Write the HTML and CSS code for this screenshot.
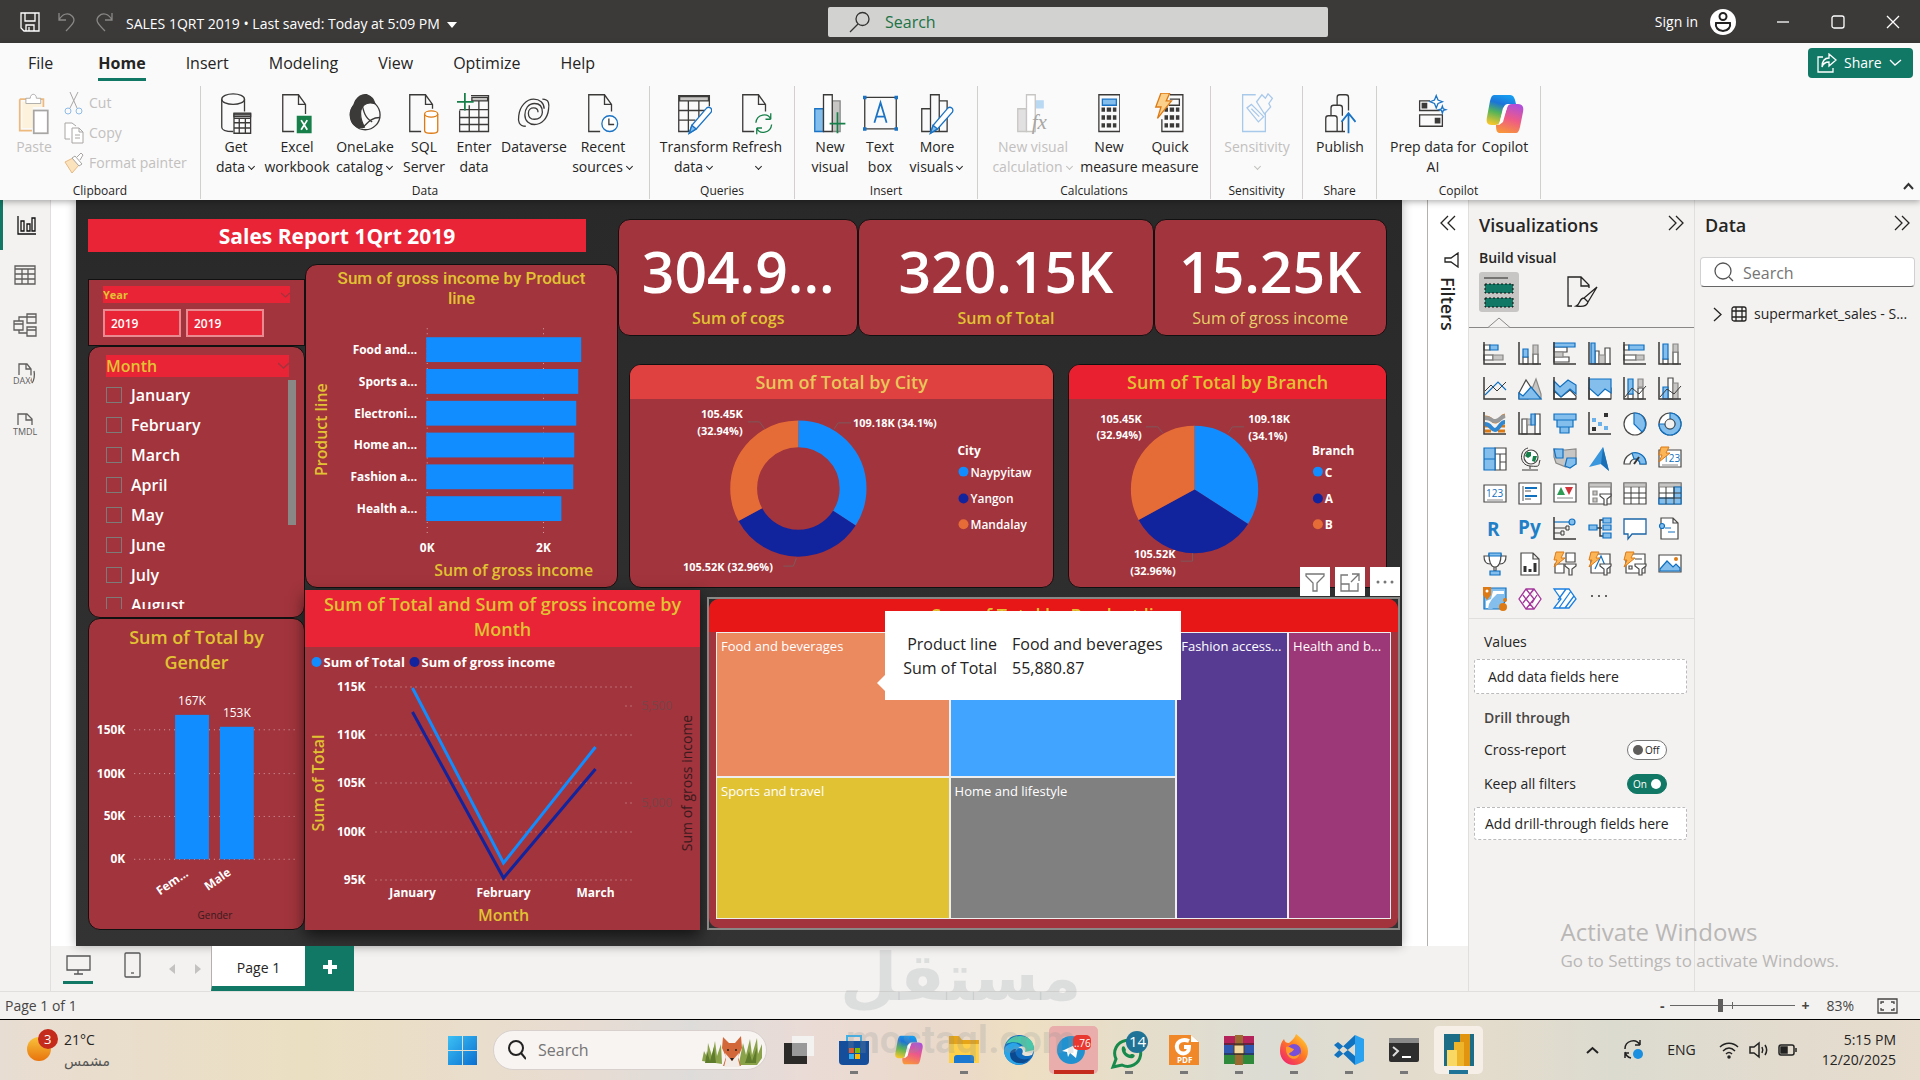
FILE: index.html
```html
<!DOCTYPE html>
<html lang="en">
<head>
<meta charset="utf-8">
<title>SALES 1QRT 2019</title>
<link rel="stylesheet" href="styles.css">
</head>
<body>
<header class="titlebar">
  <div class="title-left">
    <button class="tb-btn" aria-label="Save"><svg width="20" height="20" viewBox="0 0 20 20" class="ln"><path d="M1 1h18v18H4l-3-3zM5 1v8h10V1M6 19v-6h8v6M9 15v4"/></svg></button>
    <button class="tb-btn dim" aria-label="Undo"><svg width="20" height="20" viewBox="0 0 20 20" class="ln"><path d="M2 1v7h7M2 8c3-6 9-8 13-4s2 7-6 15"/></svg></button>
    <button class="tb-btn dim" aria-label="Redo"><svg width="20" height="20" viewBox="0 0 20 20" class="ln"><path d="M18 1v7h-7M18 8C15 2 9 0 5 4s-2 7 6 15"/></svg></button>
    <button class="doc-name">SALES 1QRT 2019 • Last saved: Today at 5:09 PM <svg width="10" height="6" viewBox="0 0 10 6"><path d="M0 0h10L5 6z" fill="#fff"/></svg></button>
  </div>
  <div class="title-search">
    <svg width="22" height="22" viewBox="0 0 22 22" class="ln"><circle cx="13.500" cy="8" r="6.500"/><path d="M9 13l-8 8"/></svg>
    <input type="text" placeholder="Search" aria-label="Search">
  </div>
  <div class="title-right">
    <button class="signin">Sign in <svg width="26" height="26" viewBox="0 0 26 26"><circle cx="13" cy="13" r="13" fill="#fff"/><g fill="none" stroke="#222" stroke-width="2"><circle cx="13" cy="7.500" r="3.500"/><path d="M6 14h14c1 4-2 8-7 8s-8-4-7-8z"/></g></svg></button>
    <button class="win" aria-label="Minimize"><svg width="14" height="14" viewBox="0 0 14 14" class="ln"><path d="M1 7h12"/></svg></button>
    <button class="win" aria-label="Maximize"><svg width="14" height="14" viewBox="0 0 14 14" class="ln"><rect x="1" y="1" width="12" height="12" rx="2"/></svg></button>
    <button class="win" aria-label="Close"><svg width="14" height="14" viewBox="0 0 14 14" class="ln"><path d="M1 1l12 12M13 1L1 13"/></svg></button>
  </div>
</header>

<section class="ribbon">
  <div class="tabrow">
    <nav class="tabs">
      <a href="#file">File</a><a href="#home" class="on">Home</a><a href="#insert">Insert</a><a href="#modeling">Modeling</a><a href="#view">View</a><a href="#optimize">Optimize</a><a href="#help">Help</a>
    </nav>
    <button class="share"><svg width="20" height="20" viewBox="0 0 20 20" class="ln"><path d="M6 4H1v15h15v-4M12 1l7 6-7 6V9c-4 0-6 2-7 5 0-6 3-9 7-9z"/></svg>Share<svg width="13" height="8" viewBox="0 0 13 8" class="ln"><path d="M1 1l5 5 6-5"/></svg></button>
  </div>
  <div class="groups">
    <div class="group g-clip">
      <div class="clip">
        <button class="cmd off"><svg width="36" height="48" viewBox="0 0 36 48"><path d="M2 7h9M23 7h6v9M2 7v36h14" fill="none" stroke="#eeb97c" stroke-width="2"/><path d="M5 10h22v6H17v24H5z" fill="#fdf3dc"/><path d="M9 12V6h5c0-6 7-6 7 0h5v6z" fill="#fff" stroke="#a8a6a4"/><rect x="18" y="20" width="16" height="26" fill="#fff" stroke="#a8a6a4" stroke-width="2"/></svg>Paste</button>
        <div class="clip-list">
          <button class="off"><svg width="20" height="24" viewBox="0 0 20 24" fill="none"><path d="M6 1l7 16M14 1L6 17" stroke="#a8a6a4"/><circle cx="4" cy="20" r="3" stroke="#8fbce6"/><circle cx="15" cy="20" r="3" stroke="#8fbce6"/></svg>Cut</button>
          <button class="off"><svg width="20" height="24" viewBox="0 0 20 24" fill="#fff" stroke="#a8a6a4"><path d="M6 18H1V2h7l4 3"/><path d="M8 7h7l4 4v11H8zM15 7v4h4M11 14h5M11 17h5"/></svg>Copy</button>
          <button class="off"><svg width="20" height="22" viewBox="0 0 20 22" fill="none"><path d="M1 10l8-4 6 7-7 8z" fill="#fbe3bd" stroke="#e8b982"/><path d="M8 6l3-2 7 8-3 2zM13 5l4-4 2 2-3 5" fill="#fff" stroke="#a8a6a4"/></svg>Format painter</button>
        </div>
      </div>
      <h3>Clipboard</h3>
    </div>
    <div class="group g-data">
      <div class="cmds">
        <button class="cmd"><svg width="36" height="48" viewBox="0 0 36 48" class="ic"><path d="M2 7v32c0 3 5 5 13 5M28 7v14"/><ellipse cx="15" cy="7" rx="13" ry="6"/><path d="M16 23h19v23H16zM16 29h19M16 34h19M16 40h19M22 29v17M29 29v17"/><path d="M16 24h19v3H16z" fill="#888"/></svg>Get<br>data<i></i></button>
        <button class="cmd"><svg width="36" height="48" viewBox="0 0 36 48" class="ic"><path d="M15 44H2V2h18l8 11v11M20 2v11h8"/><rect x="18" y="26" width="17" height="20" fill="#17804a" stroke="none"/><path d="M23 31l7 11M30 31l-7 11" stroke="#fff" stroke-width="2"/></svg>Excel<br>workbook</button>
        <button class="cmd"><svg width="36" height="44" viewBox="0 0 36 48" class="ic"><circle cx="18" cy="25" r="17"/><path d="M5 14C8 4 15 1 20 2c6 2 8 6 9 10-8-2-14 1-16 8-1 6 0 11 4 19-6 2-10 0-14-6C0 26 1 19 5 14z" fill="#3b3a39"/><path d="M14 11c2 10 4 18 12 22M14 40c5-2 8-12 21-12"/></svg>OneLake<br>catalog<i></i></button>
        <button class="cmd"><svg width="36" height="48" viewBox="0 0 36 48" class="ic"><path d="M15 44H2V2h18l8 11v5M20 2v11h8"/><path d="M19 24v19c0 4 15 4 15 0V24" stroke="#dd7a14" fill="#fff"/><ellipse cx="26.500" cy="24" rx="7.500" ry="3.500" stroke="#dd7a14" fill="#fff"/></svg>SQL<br>Server</button>
        <button class="cmd"><svg width="38" height="48" viewBox="0 0 38 48" class="ic"><path d="M16 3h20v41H3V20M3 19h33M3 28h33M3 36h33M14 14v30M25 9v35"/><path d="M17 5h18v4H17z" fill="#c8c6c4"/><path d="M9 0v20M0 10h19" stroke="#17804a" stroke-width="2"/></svg>Enter<br>data</button>
        <button class="cmd"><svg width="38" height="48" viewBox="0 0 38 48" class="ic"><path d="M29 7c8 0 8 6 7 12-1 10-8 17-16 17-6 0-11-4-11-11S13 12 20 12s9 5 9 10-4 8-9 8-7-3-7-7 3-6 6-6 5 2 5 5"/><path d="M10 38c-8 0-9-6-8-12C3 15 11 7 19 7c7 0 12 4 12 11"/></svg>Dataverse<br>&nbsp;</button>
        <button class="cmd"><svg width="36" height="48" viewBox="0 0 36 48" class="ic"><path d="M15 44H2V2h18l8 11v8M20 2v11h8"/><circle cx="26" cy="35" r="9" stroke="#1a73c4" fill="#fff"/><path d="M25 29v7h6"/></svg>Recent<br>sources<i></i></button>
      </div>
      <h3>Data</h3>
    </div>
    <div class="group g-query">
      <div class="cmds">
        <button class="cmd"><svg width="40" height="48" viewBox="0 0 40 48" class="ic"><path d="M15 44H2V3h35v12M2 20h30M2 31h19M13 9v35M25 9v20"/><path d="M3 4h33v5H3z" fill="#c8c6c4"/><path d="M14 46l3-9 17-20c3-2 7 1 5 5L22 41z" fill="#fff" stroke="#1a73c4"/><path d="M14 46l3-9 5 4z" fill="#83beec" stroke="#1a73c4"/></svg>Transform<br>data<i></i></button>
        <button class="cmd"><svg width="36" height="48" viewBox="0 0 36 48" class="ic"><path d="M15 44H2V2h18l8 11v8M20 2v11h8"/><path d="M17 34c1-10 14-12 17-4v-7m0 7h-6M35 36c-1 10-14 12-17 4v7m0-7h6" stroke="#17804a"/></svg>Refresh<br><i></i></button>
      </div>
      <h3>Queries</h3>
    </div>
    <div class="group g-insert">
      <div class="cmds">
        <button class="cmd"><svg width="38" height="48" viewBox="0 0 38 48" class="ic"><path d="M22 9h9v35h-9z" fill="#c8c6c4" stroke="#888"/><path d="M2 18h10v26H2z" fill="#83beec" stroke="#1a73c4"/><path d="M12 2h10v42H12z" fill="#fff"/><path d="M28 22v24M19 35h18" stroke="#17804a" stroke-width="2"/></svg>New<br>visual</button>
        <button class="cmd"><svg width="40" height="48" viewBox="0 0 40 48" class="ic"><path d="M2 5h36v36H2z"/><path d="M13 34L20 11l7 23M15 27h10" stroke="#1a73c4" stroke-width="2"/><path d="M0 3h4v4H0zM36 3h4v4h-4zM0 39h4v4H0zM36 39h4v4h-4z" fill="#1a73c4" stroke="none"/></svg>Text<br>box</button>
        <button class="cmd"><svg width="38" height="48" viewBox="0 0 38 48" class="ic"><path d="M2 18h10v26H2zM12 2h10v42H12zM22 9h9v35h-9"/><path d="M12 46l3-9 17-20c3-2 7 1 5 5L20 41z" fill="#fff" stroke="#1a73c4"/><path d="M12 46l3-9 5 4z" fill="#83beec" stroke="#1a73c4"/></svg>More<br>visuals<i></i></button>
      </div>
      <h3>Insert</h3>
    </div>
    <div class="group g-calc">
      <div class="cmds">
        <button class="cmd off"><svg width="38" height="48" viewBox="0 0 38 48" class="ic pale"><path d="M2 18h10v26H2z" fill="#e1e1e1"/><path d="M22 9h9v8h-9z" fill="#b9d8f2" stroke="#b9d8f2"/><path d="M12 2h10v42H12z" fill="#fff"/><text x="18" y="41" class="fx">fx</text></svg>New visual<br>calculation<i></i></button>
        <button class="cmd"><svg width="26" height="48" viewBox="0 0 26 48" class="ic"><path d="M1 2h24v42H1z"/><path d="M5 7h16v7H5z" fill="#83beec" stroke="#1a73c4"/><path d="M4 19h4m2 0h5m2 0h4M4 28h4m2 0h5m2 0h4M4 37h4m2 0h5m2 0h4" stroke-width="5"/></svg>New<br>measure</button>
        <button class="cmd"><svg width="36" height="48" viewBox="0 0 36 48" class="ic"><path d="M18 2h15v42H9V30M18 7h11v7H17"/><path d="M12 19h4m2 0h5m2 0h4M12 28h4m2 0h5m2 0h4M12 37h4m2 0h5m2 0h4" stroke-width="5"/><path d="M8 0h10l-4 9h6L4 29l4-13H2z" fill="#fbd08a" stroke="#dd7a14"/></svg>Quick<br>measure</button>
      </div>
      <h3>Calculations</h3>
    </div>
    <div class="group g-sens">
      <div class="cmds">
        <button class="cmd off"><svg width="38" height="48" viewBox="0 0 38 48" class="ic sky"><path d="M18 2H3v42h26V22M8 17l5-4 14 14-6 6zM13 18l9 9M19 10l6-8 4 4 3-5 5 5-4 6 2 4-7 8z"/></svg>Sensitivity<br><i></i></button>
      </div>
      <h3>Sensitivity</h3>
    </div>
    <div class="group g-share">
      <div class="cmds">
        <button class="cmd"><svg width="36" height="48" viewBox="0 0 36 48" class="ic"><path d="M15 13V5c0-2 1-3 3-3h7c2 0 3 1 3 3v15M8 25V17c0-2 1-3 3-3h7c2 0 3 1 3 3v9M2 44V29c0-2 1-3 3-3h7c2 0 3 1 3 3v15zM2 44h22M21 32v12"/><path d="M28 46V23M20 33l8-10 8 10" stroke="#1a73c4" stroke-width="2"/></svg>Publish<br>&nbsp;</button>
      </div>
      <h3>Share</h3>
    </div>
    <div class="group g-copilot">
      <div class="cmds">
        <button class="cmd"><svg width="36" height="48" viewBox="0 0 36 48" class="ic"><path d="M15 9H3v11h23M3 25h26v13H3z"/><path d="M6 12h5v5H6zM21 29h5v5h-5z" fill="#3b3a39"/><path d="M22 3l2 5 5 2-5 2-2 5-2-5-5-2 5-2zM29 15l1 3 3 1-3 1-1 3-1-3-3-1 3-1z" stroke="#1a73c4" fill="#fff"/></svg>Prep data for<br>AI</button>
        <button class="cmd"><svg width="38" height="42" viewBox="0 0 38 40"><use href="#copilot"/></svg>Copilot<br>&nbsp;</button>
      </div>
      <h3>Copilot</h3>
    </div>
    <button class="collapse" aria-label="Collapse ribbon"><svg width="11" height="8" viewBox="0 0 11 8" fill="none" stroke="#333" stroke-width="2"><path d="M1 7l4.500-5L10 7"/></svg></button>
  </div>
</section>

<main class="main">
  <nav class="rail">
    <a href="#report" class="on" aria-label="Report view"><svg width="20" height="20" viewBox="0 0 20 20" class="ln"><path d="M1 1v18h18M4 6h3v10H4zM10 9h3v7h-3zM15 3h3v13h-3z"/></svg></a>
    <a href="#table" aria-label="Table view"><svg width="22" height="20" viewBox="0 0 22 20" class="ln"><path d="M1 1h20v18H1zM1 4h20M1 9h20M1 14h20M8 4v15M14 4v15"/></svg></a>
    <a href="#model" aria-label="Model view"><svg width="24" height="24" viewBox="0 0 24 24" class="ln"><path d="M1 8h9v9H1zM1 11h9M14 1h9v9h-9zM14 4h9M14 14h9v9h-9zM14 17h9M6 8V4h8M6 17v3h8"/></svg></a>
    <a href="#dax" aria-label="DAX query view"><svg width="24" height="24" viewBox="0 0 24 24" class="ln"><path d="M6 12V1h8l4 5v14l-2 1M13 1v5h5M21 8c1 4 0 10-2 12"/><text x="0" y="21" class="rt">DAX</text></svg></a>
    <a href="#tmdl" aria-label="TMDL view"><svg width="26" height="24" viewBox="0 0 26 24" class="ln"><path d="M6 12V1h9l5 5v6M14 1v6h6"/><text x="1" y="22" class="rt">TMDL</text></svg></a>
  </nav>

  <div class="work">
    <div class="stage">
      <div class="canvas">
        <h1 class="rep-title">Sales Report 1Qrt 2019</h1>

        <section class="card square year">
          <label class="slicer-head small" for="y1">Year<svg width="9" height="6" viewBox="0 0 9 6" class="ln"><path d="M0 1l4.500 4L9 1"/></svg></label>
          <div class="years"><input id="y1" type="text" value="2019"><input type="text" value="2019" aria-label="Year to"></div>
        </section>

        <section class="card month">
          <h2 class="slicer-head">Month<svg width="11" height="8" viewBox="0 0 11 8" class="ln"><path d="M0 1l5.500 5L11 1"/></svg></h2>
          <div class="months">
            <label><input type="checkbox">January</label><label><input type="checkbox">February</label><label><input type="checkbox">March</label><label><input type="checkbox">April</label><label><input type="checkbox">May</label><label><input type="checkbox">June</label><label><input type="checkbox">July</label><label><input type="checkbox">August</label>
            <span class="scroll"></span>
          </div>
        </section>

        <section class="card product">
          <h2 class="din">Sum of gross income by Product line</h2>
          <svg viewBox="0 0 313 278" class="chart">
            <path class="grid" d="M122 18v210M239 18v210"/>
            <g fill="#118dff"><rect x="121" y="27" width="156" height="25"/><rect x="121" y="59" width="153" height="25"/><rect x="121" y="91" width="151" height="25"/><rect x="121" y="123" width="149" height="25"/><rect x="121" y="155" width="148" height="25"/><rect x="121" y="187" width="136" height="25"/></g>
            <g class="t12 b end"><text x="112" y="44">Food and...</text><text x="112" y="76">Sports a...</text><text x="112" y="108">Electroni...</text><text x="112" y="140">Home an...</text><text x="112" y="172">Fashion a...</text><text x="112" y="204">Health a...</text></g>
            <g class="t12 b mid"><text x="122" y="243">0K</text><text x="239" y="243">2K</text></g>
            <text class="ax mid" x="209" y="267">Sum of gross income</text>
            <text class="ax mid" transform="translate(21 120) rotate(-90)">Product line</text>
          </svg>
        </section>

        <div class="kpis">
          <section class="card kpi k1"><strong>304.9...</strong><span>Sum of cogs</span></section>
          <section class="card kpi k2"><strong>320.15K</strong><span>Sum of Total</span></section>
          <section class="card kpi k3"><strong>15.25K</strong><span>Sum of gross income</span></section>
        </div>

        <div class="pies">
          <section class="card city">
            <h2 class="head">Sum of Total by City</h2>
            <svg viewBox="0 0 425 189" class="chart">
              <g fill="none" stroke-width="27" transform="rotate(-90 169 90)"><circle cx="169" cy="90" r="55" pathLength="100" stroke="#118dff" stroke-dasharray="34.1 65.9"/><circle cx="169" cy="90" r="55" pathLength="100" stroke="#12239e" stroke-dasharray="32.96 67.04" stroke-dashoffset="-34.1"/><circle cx="169" cy="90" r="55" pathLength="100" stroke="#e66c37" stroke-dasharray="32.94 67.06" stroke-dashoffset="-67.06"/></g>
              <path class="lead" d="M118 23h12l5 7M205 30l4-6h13M154 168h10l3-8"/>
              <g class="t11 b"><text class="end" x="113" y="19">105.45K</text><text class="end" x="113" y="36">(32.94%)</text><text x="224" y="28">109.18K (34.1%)</text><text x="53" y="173">105.52K (32.96%)</text></g>
              <g class="t12 b"><text x="329" y="56">City</text></g>
              <g class="t12 m"><text x="342" y="78">Naypyitaw</text><text x="342" y="105">Yangon</text><text x="342" y="131">Mandalay</text></g>
              <circle cx="335" cy="73" r="5" fill="#118dff"/><circle cx="335" cy="100" r="5" fill="#12239e"/><circle cx="335" cy="126" r="5" fill="#e66c37"/>
            </svg>
          </section>
          <section class="card branch">
            <h2 class="head">Sum of Total by Branch</h2>
            <svg viewBox="0 0 318 189" class="chart">
              <g fill="none" stroke-width="64" transform="rotate(-90 126 91)"><circle cx="126" cy="91" r="32" pathLength="100" stroke="#118dff" stroke-dasharray="34.1 65.9"/><circle cx="126" cy="91" r="32" pathLength="100" stroke="#12239e" stroke-dasharray="32.96 67.04" stroke-dashoffset="-34.1"/><circle cx="126" cy="91" r="32" pathLength="100" stroke="#e66c37" stroke-dasharray="32.94 67.06" stroke-dashoffset="-67.06"/></g>
              <path class="lead" d="M77 28h12l5 6M160 34l4-6h12M112 163h12v-8"/>
              <g class="t11 b"><text class="end" x="73" y="24">105.45K</text><text class="end" x="73" y="40">(32.94%)</text><text x="180" y="24">109.18K</text><text x="180" y="41">(34.1%)</text><text class="end" x="107" y="160">105.52K</text><text class="end" x="107" y="177">(32.96%)</text></g>
              <g class="t12 b"><text x="244" y="56">Branch</text><text x="257" y="78">C</text><text x="257" y="105">A</text><text x="257" y="131">B</text></g>
              <circle cx="250" cy="73" r="5" fill="#118dff"/><circle cx="250" cy="100" r="5" fill="#12239e"/><circle cx="250" cy="126" r="5" fill="#e66c37"/>
            </svg>
          </section>
        </div>

        <section class="card gender">
          <h2>Sum of Total by Gender</h2>
          <svg viewBox="0 0 215 255" class="chart">
            <path class="grid" d="M45 55h162M45 99h162M45 142h162M45 185h162"/>
            <rect x="86" y="40" width="34" height="145" fill="#118dff"/><rect x="131" y="52" width="34" height="133" fill="#118dff"/>
            <g class="t12 mid"><text x="103" y="30">167K</text><text x="148" y="42">153K</text></g>
            <g class="t12 b end"><text x="36" y="59">150K</text><text x="36" y="103">100K</text><text x="36" y="146">50K</text><text x="36" y="189">0K</text><text transform="translate(100 201) rotate(-35)">Fem...</text><text transform="translate(143 200) rotate(-35)">Male</text></g>
            <text class="t10 mid dark" x="126" y="245">Gender</text>
          </svg>
        </section>

        <section class="card square line">
          <h2 class="head">Sum of Total and Sum of gross income by Month</h2>
          <svg viewBox="0 0 394 283" class="chart">
            <path class="grid" d="M70 40h256M70 88h256M70 136h256M70 185h256M70 233h256M320 59h8M320 156h8"/>
            <path d="M107 65l91 166 92-109" fill="none" stroke="#12239e" stroke-width="3"/>
            <path d="M107 41l91 175 92-116" fill="none" stroke="#118dff" stroke-width="3"/>
            <circle cx="11" cy="15" r="5" fill="#118dff"/><circle cx="109" cy="15" r="5" fill="#12239e"/>
            <g class="t13 b"><text x="18" y="20">Sum of Total</text><text x="116" y="20">Sum of gross income</text></g>
            <g class="t12 b end"><text x="60" y="44">115K</text><text x="60" y="92">110K</text><text x="60" y="140">105K</text><text x="60" y="189">100K</text><text x="60" y="237">95K</text></g>
            <g class="t12 b mid"><text x="107" y="250">January</text><text x="198" y="250">February</text><text x="290" y="250">March</text></g>
            <g class="t12 faint"><text x="336" y="63">5,500</text><text x="336" y="160">5,000</text></g>
            <text class="ax mid" x="198" y="274">Month</text>
            <text class="ax mid" transform="translate(18 136) rotate(-90)">Sum of Total</text>
            <text class="t14 mid dark" transform="translate(386 136) rotate(-90)">Sum of gross income</text>
          </svg>
        </section>

        <section class="treemap">
          <div class="vis-tools">
            <button aria-label="Filters"><svg width="20" height="20" viewBox="0 0 20 20" class="ln"><path d="M1 2h18v2l-7 7v8H8v-8L1 4z"/></svg></button>
            <button aria-label="Focus mode"><svg width="20" height="20" viewBox="0 0 20 20" class="ln"><path d="M8 3H1v16h17v-8M1 12h8v7M12 2h7v7M19 2l-8 8"/></svg></button>
            <button aria-label="More options"><svg width="20" height="20" viewBox="0 0 20 20"><g fill="#777"><circle cx="3" cy="10" r="1.500"/><circle cx="10" cy="10" r="1.500"/><circle cx="17" cy="10" r="1.500"/></g></svg></button>
          </div>
          <div class="tm-card">
            <h2>Sum of Total by Product line</h2>
            <div class="tiles">
              <div class="c-food">Food and beverages</div><div class="c-elec"></div><div class="c-sport">Sports and travel</div><div class="c-home">Home and lifestyle</div><div class="c-fash">Fashion access...</div><div class="c-health">Health and b...</div>
            </div>
          </div>
          <dl class="tip"><dt>Product line</dt><dd>Food and beverages</dd><dt>Sum of Total</dt><dd>55,880.87</dd></dl>
        </section>
      </div>
      <aside class="filters">
        <button aria-label="Expand filters"><svg width="16" height="16" viewBox="0 0 16 16" class="ln"><path d="M8 1L1 8l7 7M15 1L8 8l7 7"/></svg></button>
        <svg width="15" height="16" viewBox="0 0 15 16" class="ln"><path d="M14 1v14L7 10H1V6h6z"/></svg>
        <h2>Filters</h2>
      </aside>
    </div>
    <div class="pages">
      <button class="dev on" aria-label="Desktop layout"><svg width="25" height="20" viewBox="0 0 25 20" class="ln"><path d="M1 1h23v14H1zM12 15v4M8 19h9"/></svg></button>
      <button class="dev" aria-label="Mobile layout"><svg width="17" height="26" viewBox="0 0 17 26" class="ln"><rect x="1" y="1" width="15" height="24" rx="1"/><path d="M7 21h3"/></svg></button>
      <button class="arr" aria-label="Previous page"><svg width="6" height="10" viewBox="0 0 6 10"><path d="M6 0v10L0 5z" fill="#c4c2c0"/></svg></button>
      <button class="arr" aria-label="Next page"><svg width="6" height="10" viewBox="0 0 6 10"><path d="M0 0v10l6-5z" fill="#c4c2c0"/></svg></button>
      <a href="#page1" class="page">Page 1</a>
      <button class="add" aria-label="New page"><svg width="14" height="14" viewBox="0 0 14 14"><path d="M7 0v14M0 7h14" stroke="#fff" stroke-width="4"/></svg></button>
    </div>
  </div>

  <aside class="pane viz">
    <div class="pane-head"><h2>Visualizations</h2><button aria-label="Collapse"><svg width="16" height="16" viewBox="0 0 16 16" class="ln"><path d="M1 1l7 7-7 7M8 1l7 7-7 7"/></svg></button></div>
    <h3 class="build">Build visual</h3>
    <div class="modes">
      <button class="on" aria-label="Build visual"><svg width="30" height="32" viewBox="0 0 30 32"><path d="M0 2h24" stroke="#222"/><path d="M1 8h28v9H1zM1 22h28v9H1z" fill="#117865" stroke="#111" stroke-dasharray="2 2"/></svg></button>
      <button aria-label="Format visual"><svg width="32" height="32" viewBox="0 0 32 32" class="ln"><path d="M5 30H1V1h13l8 8v3M14 1v9h8M30 11L17 22l4 4zM17 22c-5 0-3 6-8 8 6 1 11 0 12-4"/></svg></button>
    </div>
    <svg class="notch" width="22" height="11" viewBox="0 0 22 11"><path d="M0 10.500L11 1l11 9.500" fill="#f3f2f1" stroke="#8a8886"/></svg>
    <div class="icons">
      <button aria-label="Stacked bar chart"><svg viewBox="0 0 24 24"><path class="w" d="M1 3h6v5H1zM1 13h9v5H1z"/><path class="u" d="M7 3h8v5H7z"/><path class="g" d="M10 13h10v5H10z"/><path class="a" d="M1 0v22h22"/></svg></button>
      <button aria-label="Stacked column chart"><svg viewBox="0 0 24 24"><path class="w" d="M5 15h5v7H5zM15 12h5v10h-5z"/><path class="u" d="M5 7h5v8H5z"/><path class="g" d="M15 3h5v9h-5z"/><path class="a" d="M1 0v22h22"/></svg></button>
      <button aria-label="Clustered bar chart"><svg viewBox="0 0 24 24"><path class="w" d="M1 5h13v5H1zM1 15h15v5H1z"/><path class="g" d="M1 10h9v5H1z"/><path class="u" d="M1 1h21v4H1z"/><path class="a" d="M1 0v22h22"/></svg></button>
      <button aria-label="Clustered column chart"><svg viewBox="0 0 24 24"><path class="w" d="M7 9h4v13H7zM17 6h5v16h-5z"/><path class="g" d="M11 13h6v9h-6z"/><path class="u" d="M3 1h4v21H3z"/><path class="a" d="M1 0v22h22"/></svg></button>
      <button aria-label="100% stacked bar chart"><svg viewBox="0 0 24 24"><path class="w" d="M1 3h5v5H1zM1 13h12v5H1z"/><path class="u" d="M6 3h15v5H6z"/><path class="g" d="M13 13h8v5h-8z"/><path class="a" d="M1 0v22h22"/></svg></button>
      <button aria-label="100% stacked column chart"><svg viewBox="0 0 24 24"><path class="w" d="M5 17h5v5H5zM15 10h5v12h-5z"/><path class="u" d="M5 2h5v15H5z"/><path class="g" d="M15 2h5v8h-5z"/><path class="a" d="M1 0v22h22"/></svg></button>

      <button aria-label="Line chart"><svg viewBox="0 0 24 24"><path class="n u" d="M2 18L15 5l8 8"/><path class="n" d="M2 14l6-6 6 6 9-9"/><path class="a" d="M1 0v22h22"/></svg></button>
      <button aria-label="Area chart"><svg viewBox="0 0 24 24"><path class="g" d="M10 22l8-20 5 15v5z"/><path class="w" d="M1 16L8 3l8 12-6 7H1z"/><path class="u" d="M1 22v-6l4 3 8-9 10 12z"/></svg></button>
      <button aria-label="Stacked area chart"><svg viewBox="0 0 24 24"><path class="w" d="M1 14l7 6 9-7 6 6v3H1z"/><path class="u" d="M1 4l6 6 8-7 8 5v9l-6-5-9 8-7-7z"/><path class="a" d="M1 0v22h22"/></svg></button>
      <button aria-label="100% stacked area chart"><svg viewBox="0 0 24 24"><path class="w" d="M1 11h22v11H1z"/><path class="u" d="M1 2h22v14l-6-4-7 7-9-8z"/><path class="a" d="M1 0v22h22"/></svg></button>
      <button aria-label="Line and stacked column chart"><svg viewBox="0 0 24 24"><path class="w" d="M5 17h5v5H5zM15 11h5v11h-5z"/><path class="u" d="M5 2h5v15H5z"/><path class="g" d="M15 2h5v8h-5z"/><path class="n" d="M2 20l7-9 7 6 7-8"/><path class="a" d="M1 0v22h22"/></svg></button>
      <button aria-label="Line and clustered column chart"><svg viewBox="0 0 24 24"><path class="w" d="M10 1h5v21h-5z"/><path class="g" d="M15 6h5v16h-5z"/><path class="u" d="M5 10h5v12H5z"/><path class="n" d="M2 20l7-8 7 5 7-8"/><path class="a" d="M1 0v22h22"/></svg></button>

      <button aria-label="Ribbon chart"><svg viewBox="0 0 24 24"><path d="M2 5c8 0 6 6 11 5s4-6 9-7M2 19h6m7 0h7M2 14h5m9 0h6" fill="none" stroke="#dd7a14" stroke-width="3"/><path d="M2 6c8 0 6 4 11 3s4-4 9-5" fill="none" stroke="#999" stroke-width="4"/><path d="M2 12c6 0 6 6 10 6s5-8 10-8" fill="none" stroke="#2f86d1" stroke-width="4"/><path class="a" d="M1 0v22h22"/></svg></button>
      <button aria-label="Waterfall chart"><svg viewBox="0 0 24 24"><path class="w" d="M4 7h5v15H4zM17 2h5v20h-5z"/><path class="g" d="M9 7h5v6H9z"/><path class="u" d="M13 2h4v11h-4z"/><path class="a" d="M1 0v22h22"/></svg></button>
      <button aria-label="Funnel"><svg viewBox="0 0 24 24"><path class="u" d="M1 2h22v6H1zM4 8h16v7H4zM7 15h9v6H7z"/></svg></button>
      <button aria-label="Scatter chart"><svg viewBox="0 0 24 24"><path d="M4 6h4v4H4zM10 10h4v4h-4zM16 14h4v4h-4z" fill="#6cb1ea"/><path d="M16 1h4v4h-4zM4 15h4v4H4z" fill="#333"/><path class="a" d="M1 0v22h22"/></svg></button>
      <button aria-label="Pie chart"><svg viewBox="0 0 24 24"><circle class="w" cx="12" cy="12" r="11"/><path class="u" d="M11 1a11 11 0 0 1 8 19l-8-8z"/></svg></button>
      <button aria-label="Donut chart"><svg viewBox="0 0 24 24"><circle class="w" cx="12" cy="12" r="11"/><path class="u" d="M12 1a11 11 0 1 1-11 11h6a5 5 0 1 0 5-5z"/><circle cx="12" cy="12" r="5" fill="#f3f2f1" stroke="#444"/></svg></button>

      <button aria-label="Treemap"><svg viewBox="0 0 24 24"><path class="w" d="M12 1h11v6H12zM12 7h5v16h-5zM17 7h6v8h-6zM17 15h6v8h-6z"/><path class="u" d="M1 1h11v11H1zM1 12h11v11H1z"/></svg></button>
      <button aria-label="Map"><svg viewBox="0 0 24 24"><circle class="w" cx="13" cy="10" r="7"/><path d="M9 5h4v4l-3 2-3-2zM15 9h4l-2 6-3-1z" fill="#17804a"/><path class="n" d="M10 1C1 3 1 18 12 19s8 0 10-6M12 19v3M4 23h16"/></svg></button>
      <button aria-label="Filled map"><svg viewBox="0 0 24 24"><path class="g" d="M1 2l11 1 11-1v15l-10 3-10-4-2-6z"/><path class="u" d="M1 2h9v9H3zM14 11h9v6l-6 4-5-2z"/></svg></button>
      <button aria-label="Azure map"><svg viewBox="0 0 24 24"><path d="M15 0l6 24-8-7-12 3z" fill="#3a96dd"/><path d="M15 0l6 24-8-7z" fill="#1b70b5"/></svg></button>
      <button aria-label="Gauge"><svg viewBox="0 0 24 24"><path class="w" d="M1 17a11 11 0 0 1 22 0h-6a5 5 0 0 0-10 0z"/><path class="u" d="M9 6a11 11 0 0 1 14 11h-6a5 5 0 0 0-6-5z"/><path d="M11 17l5-7" stroke="#333" stroke-width="2"/></svg></button>
      <button aria-label="Card (new)"><svg viewBox="0 0 24 24"><path class="w" d="M1 3h22v17H1z"/><text x="5" y="15" class="num">123</text><path d="M4 18h16" stroke="#888"/><path class="o" d="M3 0h8L8 6h4L1 15l3-7H1z"/></svg></button>

      <button aria-label="Card"><svg viewBox="0 0 24 24"><path class="w" d="M1 3h22v17H1z"/><text x="3" y="15" class="num">123</text><path d="M4 18h16" stroke="#888"/></svg></button>
      <button aria-label="Multi-row card"><svg viewBox="0 0 24 24"><path class="w" d="M1 1h22v21H1z"/><path d="M5 4v15M7 9h6M7 17h6" stroke="#555"/><path d="M7 6h12M7 14h12" stroke="#1070c0" stroke-width="2"/></svg></button>
      <button aria-label="KPI"><svg viewBox="0 0 24 24"><path class="w" d="M1 2h22v18H1z"/><path d="M4 13l4-8 4 8z" fill="#2f9a53"/><path d="M12 5h8l-4 8z" fill="#d13438"/><path d="M4 16h16" stroke="#888"/></svg></button>
      <button aria-label="Slicer"><svg viewBox="0 0 24 24"><path class="w" d="M1 1h22v21H1z"/><path class="g" d="M1 1h22v4H1zM5 9h4v4H5zM5 16h4v4H5z"/><path class="w" d="M12 12h11v2l-4 3v6h-3v-6l-4-3z"/></svg></button>
      <button aria-label="Table"><svg viewBox="0 0 24 24"><path class="w" d="M1 1h22v21H1z"/><path class="g" d="M1 1h22v4H1z"/><path class="n" d="M1 11h22M1 16h22M8 5v17M16 5v17"/></svg></button>
      <button aria-label="Matrix"><svg viewBox="0 0 24 24"><path class="w" d="M1 1h22v21H1z"/><path class="g" d="M1 1h22v4H1z"/><path class="u" d="M16 5h7v17H1v-6h15z"/><path class="n" d="M1 11h22M1 16h22M8 5v17M16 5v17"/></svg></button>

      <button aria-label="R script visual"><svg viewBox="0 0 24 24"><text x="4" y="19" class="lang">R</text></svg></button>
      <button aria-label="Python visual"><svg viewBox="0 0 24 24"><text x="0" y="17" class="lang">Py</text></svg></button>
      <button aria-label="Key influencers"><svg viewBox="0 0 24 24"><path class="n u" d="M1 5h15"/><circle class="u" cx="19" cy="5" r="3"/><path class="n" d="M1 11h12M1 16h7M13 9h3v4h-3zM8 14h3v4H8z"/><path class="a" d="M1 0v22h22"/></svg></button>
      <button aria-label="Decomposition tree"><svg viewBox="0 0 24 24"><path class="a" d="M8 11h6M15 3h-3v16h3"/><path class="u" d="M1 8h8v5H1zM15 1h8v5h-8zM15 8h8v5h-8zM15 16h8v5h-8z"/></svg></button>
      <button aria-label="Q and A"><svg viewBox="0 0 24 24"><path d="M1 2h22v15H9l-4 5v-5H1z" fill="#fff" stroke="#1b66a8" stroke-width="1.300"/></svg></button>
      <button aria-label="Narrative"><svg viewBox="0 0 24 24"><path class="w" d="M3 1h12l5 5v16H3zM15 1v5h5"/><path d="M7 11h6M10 15h7" stroke="#1070c0"/><circle class="u" cx="4" cy="9" r="2.500"/></svg></button>

      <button aria-label="Goals"><svg viewBox="0 0 24 24"><path class="w" d="M6 2h12c0 8-2 13-6 13S6 10 6 2zM6 4H1c0 6 2 8 6 8M18 4h5c0 6-2 8-6 8M11 15v4h2v-4"/><path class="u" d="M6 1h12v3H6zM7 19h10v4H7z"/></svg></button>
      <button aria-label="Paginated report"><svg viewBox="0 0 24 24"><path class="w" d="M3 1h12l6 6v16H3zM15 1v6h6"/><path d="M7 20v-6M12 20v-3M17 20v-9" stroke="#333" stroke-width="3"/></svg></button>
      <button aria-label="Button slicer"><svg viewBox="0 0 24 24"><path class="w" d="M13 1h9v9h-9zM2 12h9v9H2z"/><path class="w" d="M12 12h11v2l-4 3v6h-3v-6l-4-3z"/><path class="o" d="M3 0h8L8 6h4L1 15l3-7H1z"/></svg></button>
      <button aria-label="Text slicer"><svg viewBox="0 0 24 24"><path class="w" d="M3 2h19v19H3z"/><path class="n u" d="M7 17l6-13 5 12"/><path class="w" d="M12 12h11v2l-4 3v6h-3v-6l-4-3z"/><path class="o" d="M3 0h8L8 6h4L1 15l3-7H1z"/></svg></button>
      <button aria-label="List slicer"><svg viewBox="0 0 24 24"><path class="w" d="M3 2h19v19H3zM12 7h7M6 14h3v3H6z"/><path class="w" d="M12 12h11v2l-4 3v6h-3v-6l-4-3z"/><path class="o" d="M3 0h8L8 6h4L1 15l3-7H1z"/></svg></button>
      <button aria-label="Image"><svg viewBox="0 0 24 24"><path class="w" d="M1 3h22v17H1z"/><path class="u" d="M2 17l7-8 6 6 3-3 4 4v3H2z"/><circle cx="18" cy="7" r="2" fill="#dd7a14"/></svg></button>

      <button aria-label="ArcGIS map"><svg viewBox="0 0 24 24"><path class="u" d="M1 1h22v12l-6 9H1z"/><path d="M10 4h11v6l-5 2-2 5-6 4H3v-7l5-2z" fill="#fff"/><path d="M9 12l5-5h7v4l-5 2-2 5-5 4H5l1-5z" fill="#83beec"/><path d="M0 0h8v8l-4 5-4-5z" fill="#dd7a14"/><circle cx="4" cy="4" r="1.500" fill="#fff"/><circle cx="20" cy="20" r="4" fill="#dd7a14"/><circle cx="22" cy="13" r="2" fill="#dd7a14"/></svg></button>
      <button aria-label="Power Apps"><svg viewBox="0 0 24 24"><path d="M8 2h8l7 10-7 10H8L1 12zM8 2l8 10-8 10M16 2L8 12l8 10M5 8l3 4-3 4M12 7l3-4M19 8l-5 8" fill="#fff" stroke="#a4379b" stroke-width="1.300"/></svg></button>
      <button aria-label="Power Automate"><svg viewBox="0 0 24 24"><path d="M1 2h15l7 10-7 9H1l7-9zM13 2L5 13M18 4L6 21M21 9l-9 12" fill="#fff" stroke="#1a7fe0" stroke-width="1.300"/></svg></button>
      <button aria-label="More visuals"><svg viewBox="0 0 24 24"><g fill="#333"><circle cx="4" cy="9" r="1"/><circle cx="11" cy="9" r="1"/><circle cx="18" cy="9" r="1"/></g></svg></button>
    </div>
    <div class="wells">
      <h4>Values</h4>
      <div class="well tall">Add data fields here</div>
      <h4 class="drill">Drill through</h4>
      <label class="tog">Cross-report<input type="checkbox" role="switch"></label>
      <label class="tog">Keep all filters<input type="checkbox" role="switch" checked></label>
      <div class="well">Add drill-through fields here</div>
    </div>
  </aside>

  <aside class="pane data">
    <div class="pane-head"><h2>Data</h2><button aria-label="Collapse"><svg width="16" height="16" viewBox="0 0 16 16" class="ln"><path d="M1 1l7 7-7 7M8 1l7 7-7 7"/></svg></button></div>
    <div class="find"><svg width="20" height="20" viewBox="0 0 20 20" class="ln"><circle cx="9" cy="9" r="8"/><path d="M15 15l4 4"/></svg><input type="text" placeholder="Search" aria-label="Search fields"></div>
    <div class="tree"><svg width="9" height="15" viewBox="0 0 9 15" class="ln"><path d="M1 1l7 6.500L1 14"/></svg><svg width="16" height="16" viewBox="0 0 16 16" class="ln"><rect x="1" y="1" width="14" height="14" rx="2"/><path d="M1 5h14M1 11h14M5 1v14M11 1v14"/></svg><span>supermarket_sales - S...</span></div>
  </aside>
</main>

<footer class="status">
  <span>Page 1 of 1</span>
  <div class="zoom"><b>-</b><input type="range" min="10" max="195" value="83" aria-label="Zoom"><b>+</b><span>83%</span><svg width="21" height="16" viewBox="0 0 21 16" class="ln"><path d="M1 1h19v14H1zM4 6V4h3M14 4h3v2M17 10v2h-3M7 12H4v-2"/></svg></div>
</footer>

<footer class="taskbar">
  <div class="weather"><svg width="32" height="34" viewBox="0 0 32 34"><defs><linearGradient id="sun" x2="0" y2="1"><stop stop-color="#f8c33c"/><stop offset="1" stop-color="#e8730c"/></linearGradient></defs><circle cx="12" cy="20" r="12" fill="url(#sun)"/><circle cx="21" cy="10" r="10" fill="#c42b1c"/><text x="17" y="15" fill="#fff" class="n12">3</text></svg><p>21°C<br><span lang="ar">مشمس</span></p></div>
  <div class="apps">
    <button class="start" aria-label="Start"><svg width="29" height="29" viewBox="0 0 29 29"><defs><linearGradient id="wn" x2="1" y2="1"><stop stop-color="#3cc0f5"/><stop offset="1" stop-color="#0a6fd0"/></linearGradient></defs><path d="M0 0h14v14H0zM15 0h14v14H15zM0 15h14v14H0zM15 15h14v14H15z" fill="url(#wn)"/></svg></button>
    <div class="tsearch"><svg width="18" height="20" viewBox="0 0 18 20" fill="none" stroke="#222" stroke-width="2"><circle cx="8" cy="8" r="7"/><path d="M13 13l5 6"/></svg><input type="text" placeholder="Search" aria-label="Search Windows">
      <svg width="62" height="34" viewBox="0 0 62 34"><path d="M1 28L3 18l3 6 1-14 4 13 3-15 2 15 4-12 1 20zM38 30l4-20 3 12 4-16 2 16 5-17 1 16 4-10v14l-5 7H38z" fill="#8aa34a"/><path d="M4 30l2-12 3 10 4-14 2 16zM44 30l4-12 3 10 5-14-1 16z" fill="#5f7c2c"/><path d="M22 4l6 6h6l6-7 1 12-4 9 3 9H22l3-9-4-9z" fill="#d2683a"/><path d="M24 20l7 8 7-8-1 6 2 8H23l2-8z" fill="#f3ece6"/><path d="M29 25h4l-2 3z" fill="#222"/><circle cx="27" cy="17" r="1" fill="#222"/><circle cx="35" cy="17" r="1" fill="#222"/></svg></div>
    <button aria-label="Task view"><svg width="30" height="30" viewBox="0 0 30 30"><path d="M0 8h23v21H0z" fill="#2b2a29"/><path d="M8 1h22v20H8z" fill="#f4f4f4" fill-opacity=".9"/><path d="M8 8h15v13H8z" fill="#999"/></svg></button>
    <button class="run" aria-label="Microsoft Store"><svg width="30" height="30" viewBox="0 0 30 30"><path d="M8 6V1h14v5" fill="none" stroke="#3cb3ee" stroke-width="2"/><path d="M0 6h30v20q0 4-4 4H4q-4 0-4-4z" fill="#154f9c"/><path d="M10 13h5v5h-5z" fill="#f25022"/><path d="M16 13h5v5h-5z" fill="#7fba00"/><path d="M10 19h5v5h-5z" fill="#34b1f0"/><path d="M16 19h5v5h-5z" fill="#ffb900"/></svg></button>
    <button aria-label="Copilot"><svg width="30" height="30" viewBox="0 0 38 40"><defs><linearGradient id="cpa" x1="0.600" x2="0.300" y2="1"><stop stop-color="#169bf0"/><stop offset=".3" stop-color="#1b74d8"/><stop offset=".6" stop-color="#52b35a"/><stop offset="1" stop-color="#f2c62c"/></linearGradient><linearGradient id="cpb" x1="0.600" x2="0.300" y2="1"><stop stop-color="#b14fd8"/><stop offset=".5" stop-color="#ee5b86"/><stop offset="1" stop-color="#f8953a"/></linearGradient></defs><g id="copilot"><path d="M8 1h16c4 0 5 4 6 9h-8c-3 0-4 2-5 6l-3 11c-1 3-2 4-5 4H6c-5 0-6-3-5-8L4 7c1-4 2-6 4-6z" fill="url(#cpa)"/><path d="M30 39H14c-3 0-4-2-4-8 4 0 6-2 7-6l4-11c1-3 2-4 5-4h6c5 0 6 4 5 8l-3 15c-1 4-2 6-4 6z" fill="url(#cpb)"/><path d="M17 14l5-4-5 18-4 3z" fill="#fff"/></g></svg></button>
    <button class="run" aria-label="File Explorer"><svg width="30" height="28" viewBox="0 0 30 28"><path d="M0 0h10l3 4h17v23H0z" fill="#e6a417"/><path d="M0 8h30v19H0z" fill="#ffd04a"/><path d="M5 27v-5q0-3 3-3h14q3 0 3 3v5z" fill="#1b78d0"/></svg></button>
    <button aria-label="Edge"><svg width="30" height="30" viewBox="0 0 30 30"><circle cx="15" cy="15" r="15" fill="#0f6cbf"/><path d="M2 9C8-3 30-2 30 14c0 6-9 7-10 4 3-8-8-14-18-9z" fill="#48c8a8"/><path d="M0 15C3 6 16 6 18 14c-9-3-11 12 2 15C8 32 0 24 0 15z" fill="#2aa5e8"/><path d="M12 14c-3 8 7 13 14 9-6 9-20 6-20-4 0-3 3-5 6-5z" fill="#0b4a8f"/><path d="M14 13c4-1 6 3 4 6 2 3 7 2 10 1l2-5-9 2c2-4-2-8-7-4z" fill="#e8e2d6"/></svg></button>
    <button class="alert" aria-label="Telegram"><svg width="38" height="32" viewBox="0 0 38 32"><circle cx="16" cy="16" r="14" fill="#2291d0"/><path d="M7 17l17-8-3 15-6-5-2 4-1-5z" fill="#fff"/><rect x="18" y="1" width="18" height="15" rx="5" fill="#e8382f"/><text x="19" y="13" fill="#fff" class="n11">..76</text></svg></button>
    <button class="run" aria-label="WhatsApp"><svg width="38" height="38" viewBox="0 0 38 38"><path d="M3 36l3-8A13 13 0 1 1 12 34z" fill="none" stroke="#178a4c" stroke-width="3"/><path d="M12 16c2-2 3 0 4 3-2 2 4 6 5 4 4 0 5 2 2 4-5 2-13-5-11-11z" fill="#178a4c"/><circle cx="27" cy="11" r="11" fill="#1f7396"/><text x="19" y="16" fill="#fff" class="n14">14</text></svg></button>
    <button class="run" aria-label="Foxit PDF"><svg width="30" height="30" viewBox="0 0 30 30"><path d="M0 0h22l8 7v23H0z" fill="#f0882a"/><path d="M22 0v7h8z" fill="#fff"/><path d="M20 6c-7-3-13 1-12 7 1 7 12 8 12-1h-5" fill="none" stroke="#fff" stroke-width="4"/><text x="8" y="28" fill="#fff" class="n8">PDF</text></svg></button>
    <button class="run" aria-label="WinRAR"><svg width="30" height="30" viewBox="0 0 30 30"><path d="M0 1h30v9H0z" fill="#b4235a"/><path d="M0 10h30v10H0z" fill="#2f58b0"/><path d="M0 20h30v9H0z" fill="#2f8a3c"/><path d="M11 0h8v30h-8z" fill="#9a6a30"/><path d="M10 10h10v9H10z" fill="#f0d9a0" stroke="#5c3c12"/><path d="M0 9h30M0 19h30" stroke="#222"/></svg></button>
    <button class="run" aria-label="Firefox"><svg width="30" height="32" viewBox="0 0 30 32"><defs><linearGradient id="ff" x1="1" x2="0.200" y2="1"><stop stop-color="#ffe03a"/><stop offset=".5" stop-color="#ff7a22"/><stop offset="1" stop-color="#f0246e"/></linearGradient></defs><path d="M17 0c5 4 12 9 12 17 0 9-6 14-14 14S1 25 1 17C1 12 2 8 5 5c1 3 2 4 5 4 3-3 6-5 7-9z" fill="url(#ff)"/><circle cx="15" cy="17" r="7" fill="#7a4fd8"/><path d="M7 13c4-1 5 2 8 2-1 3-4 3-5 5 2 3 8 3 11-1-1 9-15 8-14-6z" fill="#ff9a2a"/></svg></button>
    <button class="run" aria-label="Visual Studio Code"><svg width="30" height="30" viewBox="0 0 30 30"><path d="M21 0l9 4v22l-9 4z" fill="#2aa2f0"/><path d="M21 0v9L4 23l-4-3zM21 30v-9L4 7l-4 3z" fill="#1173c0"/></svg></button>
    <button class="run" aria-label="Terminal"><svg width="30" height="24" viewBox="0 0 30 24"><rect width="30" height="24" rx="2" fill="#2e2e2e"/><path d="M0 0h30v5H0z" fill="#8a8a8a"/><path d="M4 9l5 4-5 5" fill="none" stroke="#ddd" stroke-width="2"/><path d="M13 19h9" stroke="#fff" stroke-width="2"/></svg></button>
    <button class="active" aria-label="Power BI Desktop"><svg width="30" height="32" viewBox="0 0 30 32"><path d="M0 0h30v32H0z" fill="#1d6d86"/><path d="M16 0h10v32H16z" fill="#e0940f"/><path d="M10 8h10v24H10z" fill="#eeb42a"/><path d="M3 16h10v16H3z" fill="#f9d964"/></svg></button>
  </div>
  <div class="tray">
    <svg width="13" height="8" viewBox="0 0 13 8" fill="none" stroke="#222" stroke-width="2"><path d="M1 7l5.500-5L12 7"/></svg>
    <svg width="22" height="22" viewBox="0 0 22 22" fill="none" stroke="#222" stroke-width="1.500"><path d="M3 10a8 8 0 0 1 15-4V1M18 6h-5M3 13a8 8 0 0 0 6 6M3 19v-5h4"/><circle cx="16" cy="15" r="5" fill="#1a8fe0" stroke="none"/></svg>
    <span>ENG</span>
    <svg width="80" height="18" viewBox="0 0 80 18" fill="none" stroke="#222" stroke-width="1.500"><path d="M1 6c5-5 13-5 18 0M4 10c4-4 8-4 12 0M7 13c2-2 4-2 6 0"/><circle cx="10" cy="16" r="1" fill="#222"/><path d="M31 6h4l5-4v14l-5-4h-4zM43 6c1 2 1 4 0 6M46 4c2 3 2 7 0 10"/><rect x="60" y="4" width="15" height="10" rx="2"/><path d="M62 6h6v6h-6z" fill="#222"/><path d="M77 7v4"/></svg>
    <time>5:15 PM<br>12/20/2025</time>
  </div>
  <div class="mark" aria-hidden="true"><b lang="ar">مستقل</b><span>mostaql.com</span></div>
  <div class="activate"><b>Activate Windows</b><span>Go to Settings to activate Windows.</span></div>
</footer>
</body>
</html>
```
FILE: styles.css
```css
* { box-sizing: border-box; }
body { margin: 0; min-height: 100vh; display: flex; flex-direction: column; background: #f3f2f1; color: #252423; font: 14px/20px "Open Sans", "Noto Sans", "DejaVu Sans", sans-serif; }
h1, h2, h3, h4, p, dl, dd { margin: 0; font-weight: 600; }
button { border: 0; padding: 0; margin: 0; background: none; color: inherit; font: inherit; }
input { font: inherit; color: inherit; border: 0; padding: 0; margin: 0; min-width: 0; background: none; outline: 0; }
a { color: inherit; text-decoration: none; }
.ln { fill: none; stroke: currentColor; stroke-width: 1.3; }

/* title bar */
.titlebar { display: grid; grid-template-columns: 828fr 500fr 592fr; height: 43px; align-items: center; background: #3b3a39; color: #fff; }
.title-left { display: flex; align-items: center; gap: 17px; padding-left: 20px; }
.tb-btn { display: flex; }
.dim { color: #8a8886; }
.doc-name { margin-left: -5px; padding-top: 4px; white-space: nowrap; }
.doc-name svg { margin-left: 4px; vertical-align: middle; }
.title-search { display: flex; align-items: center; gap: 14px; height: 30px; padding-left: 21px; border-radius: 2px; background: #d2d2d0; color: #333; }
.title-search input { flex: 1; font-size: 16px; }
.title-search input::placeholder { color: #217346; opacity: 1; }
.title-right { display: flex; justify-content: flex-end; align-items: center; gap: 10px; padding-right: 5px; }
.signin { display: flex; align-items: center; gap: 12px; margin-right: 14px; }
.win { display: flex; width: 45px; justify-content: center; }

/* ribbon */
.ribbon { background: #fafafa; box-shadow: 0 2px 6px rgba(0,0,0,.3); position: relative; z-index: 2; }
.tabrow { display: flex; justify-content: space-between; height: 43px; padding: 0 7px 0 8px; }
.tabs { display: flex; font-size: 16px; line-height: 40px; }
.tabs a { padding: 0 20px; text-align: center; height: 38px; }
.tabs a:first-child { padding-right: 25px; }
.tabs .on { font-weight: 700; background: linear-gradient(#117865, #117865) center bottom / 48px 3px no-repeat; }
.share { display: flex; align-items: center; gap: 7px; width: 105px; height: 30px; margin-top: 5px; padding-left: 9px; border-radius: 4px; background: #117865; color: #fff; font-size: 14px; }
.groups { display: flex; height: 114px; padding-bottom: 1px; }
.group { display: flex; flex-direction: column; justify-content: space-between; border-right: 1px solid #d2d0ce; flex: none; }
.group h3 { font-size: 12px; font-weight: 400; line-height: 16px; text-align: center; }
.g-clip { width: 201px; }
.g-data { width: 449px; } .g-data .cmds { grid-template-columns: 56px 66px 70px 48px 52px 68px 70px; padding-left: 7px; }
.g-query { width: 145px; } .g-query .cmds { grid-template-columns: 68px 58px; padding-left: 10px; }
.g-insert { width: 183px; } .g-insert .cmds { grid-template-columns: 54px 46px 68px; padding-left: 8px; }
.g-calc { width: 233px; } .g-calc .cmds { grid-template-columns: 90px 62px 60px; padding-left: 10px; }
.g-sens { width: 92px; } .g-sens .cmds { grid-template-columns: 80px; padding-left: 6px; }
.g-share { width: 74px; } .g-share .cmds { grid-template-columns: 60px; padding-left: 7px; }
.g-copilot { width: 164px; } .g-copilot .cmds { grid-template-columns: 92px 52px; padding-left: 10px; }
.cmds { display: grid; justify-items: center; padding-top: 7px; }
.cmd { display: block; width: max-content; white-space: nowrap; text-align: center; }
.cmd svg { display: block; height: 42px; width: auto; margin: 0 auto 2px; }
.cmd i { display: inline-block; width: 5px; height: 5px; margin: 0 2px 3px 4px; border: solid currentColor; border-width: 0 1px 1px 0; transform: rotate(45deg); }
.ic { fill: none; stroke: #3b3a39; stroke-width: 1.5; }
.pale { stroke: #c8c6c4; }
.sky { stroke: #a9c9ea; }
.fx { font: italic 24px "Liberation Serif", serif; fill: #a8a6a4; stroke: none; }
.off { color: #c2c0be; }
.clip { display: flex; align-items: flex-start; padding: 2px 0 0 14px; gap: 10px; }
.clip .cmd { width: 40px; padding-top: 5px; }
.clip-list { display: flex; flex-direction: column; }
.clip-list button { display: flex; align-items: center; gap: 5px; height: 30px; white-space: nowrap; }
.collapse { margin-left: auto; align-self: flex-end; padding: 0 6px 4px; }

/* layout */
.main { flex: 1; display: flex; }
.rail { width: 51px; border-right: 1px solid #e1dfdd; color: #605e5c; display: flex; flex-direction: column; }
.rail a { display: flex; height: 50px; align-items: center; justify-content: center; }
.rail .on { color: #111; border-left: 3px solid #117865; }
.rt { font: 9px "Open Sans", sans-serif; fill: #605e5c; stroke: #f3f2f1; stroke-width: 3; paint-order: stroke; }
.work { flex: 1; min-width: 0; display: flex; flex-direction: column; }
.stage { flex: 1; display: flex; background: #fff; }
.canvas { flex: 1; min-width: 0; margin: 0 25px; padding: 19px 2px 15px 12px; background: linear-gradient(#292929, #333); box-shadow: 0 0 10px rgba(0,0,0,.3); display: grid; align-content: start;
  grid-template-columns: 217fr 313fr 11fr 71fr 7fr 680fr 13fr;
  grid-template-rows: 33px 12px 15px 57px 10px 18px 224px 2px 7px 21px 312px; color: #fff; }
.card { display: flex; flex-direction: column; min-width: 0; min-height: 0; background: #a1343c; border: 1px solid #111; border-radius: 12px; overflow: hidden; }
.square { border-radius: 0; }
.card h2, .treemap h2 { color: #e1c233; font-size: 18px; line-height: 25px; text-align: center; }
.chart { display: block; width: 100%; flex: 1; min-height: 0; }
.rep-title { grid-area: 1 / 1 / 2 / 3; margin-right: 32px; background: #e92436; font-size: 21px; font-weight: 700; line-height: 34px; height: 33px; text-align: center; }
.year { grid-area: 4 / 1 / 6 / 2; padding: 6px 14px; }
.month { grid-area: 6 / 1 / 11 / 2; padding: 8px 8px 8px 17px; }
.product { grid-area: 3 / 2 / 8 / 3; }
.gender { grid-area: 11 / 1 / 12 / 2; padding-top: 6px; }
.line { grid-area: 9 / 2 / 12 / 5; border: 0; box-shadow: 0 6px 14px rgba(0,0,0,.6); }
.kpis { grid-area: 1 / 3 / 5 / 7; display: flex; }
.pies { grid-area: 7 / 4 / 8 / 7; display: flex; gap: 14px; }
.treemap { grid-area: 10 / 6 / 12 / 8; }

.slicer-head { display: flex; align-items: center; justify-content: space-between; background: #e92436; }
.card h2.slicer-head { margin-right: 7px; line-height: 24px; height: 22px; font-size: 16px; }
.slicer-head svg { color: #a1343c; }
.small { color: #e1c233; font-size: 11px; font-weight: 700; line-height: 17px; }
.years { display: flex; gap: 5px; padding: 6px 26px 0 0; }
.years input { width: 50%; height: 28px; padding-left: 6px; border: 2px solid #e88a90; background: #e92436; color: #fff; font-weight: 600; font-size: 12px; }
.months { position: relative; flex: 1; min-height: 0; overflow: hidden; padding-top: 3px; }
.months label { display: flex; align-items: center; gap: 9px; height: 30px; font-size: 16px; font-weight: 600; }
.months input { appearance: none; width: 16px; height: 16px; border: 1px solid #7d7a78; }
.scroll { position: absolute; right: 0; top: 3px; width: 8px; height: 145px; background: #8a8886; }
.card h2.din { font: 500 17px/20px Roboto, sans-serif; padding: 3px 24px 0; height: 45px; }

.kpi { align-items: center; }
.k1 { flex: 240; } .k2 { flex: 295; } .k3 { flex: 233; }
.kpi strong { font-size: 57px; line-height: 72px; font-weight: 600; padding-top: 15px; }
.kpi span { color: #e1c233; font-size: 16px; line-height: 22px; font-weight: 600; }
.k3 span { font-weight: 400; color: #e8d06a; }

.city { flex: 425; } .branch { flex: 318; }
.card .head { background: #e92030; line-height: 34px; }
.city .head { background: #df4040; color: #e8c75a; }
.line .head { background: #e92436; line-height: 25px; padding: 2px 8px 5px; }
.gender h2 { padding: 0 30px; }
.grid { stroke: #d5a5a8; stroke-dasharray: 1 4; fill: none; }
.lead { stroke: #7d5a5c; fill: none; }
.chart text { fill: #fff; }
.chart .ax { fill: #e1c233; font-size: 16px; font-weight: 600; }
.chart .dark { fill: #3b1a1d; } .chart .faint text { fill: #7a4347; }
.t10 { font-size: 10px; } .t11 { font-size: 11px; } .t12 { font-size: 12px; } .t13 { font-size: 13px; } .t14 { font-size: 14px; }
.b { font-weight: 700; } .m { font-weight: 600; }
.end { text-anchor: end; } .mid { text-anchor: middle; }

.treemap { position: relative; border: 2px solid #8a8886; }
.tm-card { height: 100%; display: flex; flex-direction: column; background: #a1343c; border-radius: 10px; overflow: hidden; padding-bottom: 9px; }
.treemap h2 { background: #e81717; line-height: 33px; }
.tiles { flex: 1; margin: 0 7px; display: grid; gap: 2px; border: 1px solid #eee; background: #eee; grid-template-columns: 234fr 227fr 111fr 102fr; grid-template-rows: 145fr 142fr; font-size: 13px; }
.tiles div { padding: 3px 0 0 4px; white-space: nowrap; min-width: 0; overflow: hidden; }
.c-food { background: #eb895f; } .c-elec { background: #41a4ff; }
.c-sport { background: #e1c233; grid-row: 2; } .c-home { background: #808080; grid-row: 2; }
.c-fash { background: #573b92; grid-area: 1 / 3 / 3 / 4; } .c-health { background: #9c3877; grid-area: 1 / 4 / 3 / 5; }
.vis-tools { position: absolute; right: -2px; top: -32px; display: flex; gap: 5px; color: #777; }
.vis-tools button { width: 30px; height: 29px; background: #fff; display: grid; place-items: center; }
.tip { position: absolute; left: 176px; top: 12px; width: 296px; height: 89px; background: #fff; color: #252423; display: grid; grid-template-columns: 112px 1fr; column-gap: 15px; align-content: center; font-size: 16px; line-height: 24px; }
.tip dt { text-align: right; } .tip dd { font-weight: 400; white-space: nowrap; }
.tip::before { content: ""; position: absolute; left: -8px; top: 64px; border: solid transparent; border-width: 8px 8px 8px 0; border-right-color: #fff; }

.filters { width: 41px; border-left: 1px solid #b3b0ad; display: flex; flex-direction: column; align-items: center; padding-top: 15px; }
.filters > svg { margin: 16px 0 9px 6px; }
.filters h2 { writing-mode: vertical-rl; font-size: 18px; line-height: 24px; }
.pages { display: flex; height: 45px; align-items: stretch; }
.dev { width: 54px; display: grid; place-items: center; padding-bottom: 8px; color: #555; }
.dev.on { background: linear-gradient(#117865, #117865) center 35px / 30px 3px no-repeat; }
.arr { width: 26px; }
.page { width: 94px; border-left: 1px solid #b3b0ad; border-bottom: 5px solid #117865; background: #fff; text-align: center; line-height: 44px; }
.add { width: 49px; background: #117865; }

/* side panes */
.pane { border-left: 1px solid #e1dfdd; background: #f3f2f1; }
.pane-head { display: flex; justify-content: space-between; align-items: center; padding: 0 10px; height: 24px; margin-top: 13px; }
.pane-head h2 { font-size: 18px; line-height: 24px; }
.viz, .data { width: 226px; }
.build { font-size: 14px; padding: 11px 10px 4px; }
.modes { display: flex; gap: 44px; padding: 0 10px; height: 56px; border-bottom: 1px solid #8a8886; }
.modes button { width: 40px; height: 40px; display: grid; place-items: center; border-radius: 3px; }
.modes .on { background: #c8c6c4; }
.notch { display: block; margin: -11px 0 0 19px; }
.icons { display: grid; grid-template-columns: repeat(6, 24px); grid-auto-rows: 24px; gap: 11px; padding: 14px 13px 7px 14px; border-bottom: 1px solid #e1dfdd; }
.icons svg { display: block; width: 24px; height: 24px; overflow: visible; }
.a { fill: none; stroke: #3b3a39; stroke-width: 1.5; }
.w { fill: #fff; stroke: #4a4948; stroke-width: 1.2; }
.g { fill: #c8c6c4; stroke: #8a8886; stroke-width: 1.2; }
.u { fill: #83beec; stroke: #1070c0; stroke-width: 1.2; }
.o { fill: #fbb556; stroke: #dd7a14; }
.n { fill: none; stroke: #3b3a39; }
.n.u { fill: none; stroke: #1070c0; }
.num { font: 10px "Open Sans", sans-serif; fill: #1070c0; }
.lang { font: 700 19px "Open Sans", sans-serif; fill: #1f80c8; }
.wells { padding: 13px 7px 0 5px; }
.wells h4 { font-weight: 400; padding-left: 10px; margin-bottom: 7px; }
.well { border: 1px dashed #bbb; background: #fff; height: 33px; line-height: 32px; padding-left: 10px; border-radius: 3px; white-space: nowrap; }
.tall { height: 35px; line-height: 34px; padding-left: 13px; }
.wells .drill { font-weight: 600; color: #484644; margin: 14px 0 5px; }
.tog { display: flex; justify-content: space-between; align-items: center; height: 34px; padding: 0 20px 0 10px; }
.tog input { appearance: none; display: flex; align-items: center; width: 40px; height: 20px; padding: 0 5px; gap: 2px; border: 1px solid #777; border-radius: 10px; background: #fff; font-size: 10px; }
.tog input::before { content: ""; width: 10px; height: 10px; border-radius: 5px; background: #605e5c; }
.tog input::after { content: "Off"; }
.tog input:checked { background: #117865; border-color: #117865; color: #fff; flex-direction: row-reverse; gap: 4px; }
.tog input:checked::before { background: #fff; }
.tog input:checked::after { content: "On"; }
.tog + .well { margin-top: 6px; }
.find { display: flex; align-items: center; gap: 9px; height: 30px; margin: 20px 5px 0; padding-left: 13px; border: 1px solid #d1d1d1; border-bottom-color: #666; border-radius: 4px; background: #fff; color: #555; }
.find input { flex: 1; font-size: 16px; padding-top: 2px; }
.find input::placeholder { color: #757575; }
.tree { display: flex; align-items: center; gap: 9px; padding: 17px 0 0 18px; white-space: nowrap; font-size: 14px; }
.tree span { margin-left: -2px; }

.status { display: flex; justify-content: space-between; align-items: center; height: 29px; padding: 0 22px 0 5px; border-top: 1px solid #e1dfdd; border-bottom: 1px solid #000; color: #484644; }
.zoom { display: flex; align-items: center; gap: 6px; }
.zoom span { margin: 0 17px 0 11px; }
.zoom input { appearance: none; width: 125px; height: 13px; background: linear-gradient(#666, #666) center / 100% 1px no-repeat, linear-gradient(#666, #666) center / 1px 7px no-repeat; }
.zoom input::-webkit-slider-thumb { appearance: none; width: 5px; height: 13px; background: #605e5c; }

/* taskbar */
.taskbar { position: relative; display: flex; align-items: center; height: 60px; background: linear-gradient(90deg, #e8ddd2, #ebdfc2 16%, #e8dcd2 30%, #dedcda 36%, #eadbd6 42%, #ead9c8 50%, #eedfc2 53%, #dcdcd4 66%, #e5dccb 76%, #dcdbd0 84%, #e7dccd); }
.weather { display: flex; gap: 5px; padding-left: 27px; width: 432px; }
.weather p { font-weight: 400; line-height: 21px; }
.weather span { color: #555; font-family: "DejaVu Sans", sans-serif; font-size: 14px; }
.apps { display: flex; align-items: center; }
.apps button { width: 49px; height: 48px; margin: 0 3px; display: grid; place-items: center; border-radius: 5px; }
.apps .start { width: 55px; }
.apps .run { background: linear-gradient(#777, #777) center 100% / 8px 3px no-repeat; }
.apps .alert { background: linear-gradient(#c42b1c, #c42b1c) center 100% / 40px 4px no-repeat #e9adab; }
.apps .active { background: linear-gradient(#1f7396, #1f7396) center 100% / 19px 4px no-repeat #f5efe8; }
.tsearch { display: flex; align-items: center; width: 274px; height: 40px; margin-right: 4px; padding: 0 3px 0 14px; gap: 12px; border: 1px solid #d8d0cc; border-radius: 20px; background: #f8f4f1; color: #555; }
.tsearch input { flex: 1; font-size: 16px; }
.tray { margin-left: auto; display: flex; align-items: center; gap: 23px; padding-right: 24px; }
.tray time { text-align: right; }
.n8 { font: 700 8px "Open Sans", sans-serif; } .n11 { font: 10px "Open Sans", sans-serif; } .n12 { font: 13px "Open Sans", sans-serif; } .n14 { font: 15px "Open Sans", sans-serif; }
.mark, .activate { position: absolute; pointer-events: none; display: flex; flex-direction: column; }
.mark { left: 44%; top: -84px; width: 232px; color: rgba(140,150,150,.22); align-items: center; }
.mark b { font: 700 66px/84px "DejaVu Sans", sans-serif; }
.mark span { font: 700 39px/40px Roboto, sans-serif; }
.activate { right: 81px; bottom: 107px; color: #b9b7b5; }
.activate b { font-weight: 400; font-size: 24px; line-height: 34px; }
.activate span { font-size: 17px; line-height: 24px; }
.tip dt { font-weight: 400; }
```
